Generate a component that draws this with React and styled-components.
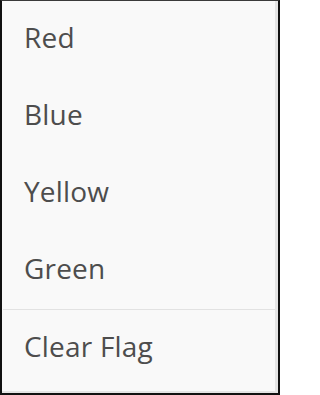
import { createGlobalStyle, styled } from "styled-components"

const GlobalStyle = createGlobalStyle`
  html, body {
    margin: 0;
    padding: 0;
    background: #ffffff;
  }
`

const flagOptions = ["Red", "Blue", "Yellow", "Green"]

export default function App() {
  return (
    <>
      <GlobalStyle />
      <MenuFrame>
        <MenuPanel>
          {flagOptions.map((color) => (
            <MenuItem key={color}>{color}</MenuItem>
          ))}
          <Divider />
          <MenuItem>Clear Flag</MenuItem>
        </MenuPanel>
      </MenuFrame>
    </>
  )
}

const MenuFrame = styled.div`
  box-sizing: border-box;
  width: 280px;
  height: 395px;
  border: 2px solid #111;
  border-top: 1px solid #3a3a3a;
  background: #e6e6e6;
`

const MenuPanel = styled.div`
  box-sizing: border-box;
  height: 100%;
  display: flex;
  flex-direction: column;
  background: #f9f9f9;
  border-right: 2px solid #e4e4e4;
  border-bottom: 2px solid #e4e4e4;
  margin-right: 1px;
`

const MenuItem = styled.div`
  box-sizing: border-box;
  height: 77px;
  display: flex;
  align-items: center;
  padding: 0 0 6px 22px;
  font-family: "Open Sans", "Liberation Sans", sans-serif;
  font-size: 28px;
  letter-spacing: 0.2px;
  color: #4d4d4d;
  flex-shrink: 0;
  white-space: nowrap;
`

const Divider = styled.div`
  height: 1px;
  background: #e2e2e2;
  margin-left: 1px;
`
